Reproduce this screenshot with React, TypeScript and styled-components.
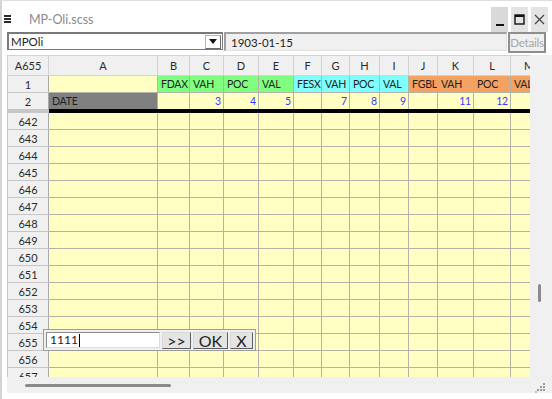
import styled, { createGlobalStyle } from "styled-components";

const GlobalStyle = createGlobalStyle`
  html, body {
    margin: 0;
    padding: 0;
    background: #ffffff;
  }
  body {
    font-family: Lato, "Noto Sans", sans-serif;
    color: #1e1e1e;
  }
`;

const Window = styled.div`
  width: 552px;
  height: 399px;
  box-sizing: border-box;
  border-left: 2px solid #d4d4d4;
  border-top: 1px solid #dedede;
  background: #ffffff;
  display: flex;
  flex-direction: column;
  overflow: hidden;
`;

const TitleBar = styled.div`
  height: 31px;
  display: flex;
  align-items: flex-start;
  padding-left: 2px;
  padding-right: 4px;
`;

const Hamburger = styled.div`
  width: 7px;
  margin-top: 14px;
  display: flex;
  flex-direction: column;
  gap: 1px;
  & > span {
    height: 2px;
    background: #2a2a2a;
  }
`;

const Title = styled.div`
  margin-left: 18px;
  margin-top: 11px;
  font-size: 12.5px;
  color: #8c8c8c;
`;

const WinButtons = styled.div`
  margin-left: auto;
  margin-top: 6px;
  display: flex;
  gap: 3px;
`;

const WinButton = styled.div<{ $bg?: string }>`
  width: 17px;
  height: 25px;
  background: ${(p) => p.$bg ?? "#d9d9d9"};
  display: flex;
  align-items: center;
  justify-content: center;
`;

const Toolbar = styled.div`
  height: 23px;
  display: flex;
  align-items: flex-start;
  padding-left: 5px;
`;

const Combo = styled.div`
  width: 216px;
  height: 18px;
  box-sizing: border-box;
  border: 1px solid #7a7a7a;
  border-top-width: 2px;
  border-left-width: 2px;
  background: #ffffff;
  display: flex;
  align-items: center;
  font-size: 11.5px;
  padding-left: 2px;
`;

const ComboText = styled.span`
  flex: 1;
`;

const DropButton = styled.div`
  width: 16px;
  height: 14px;
  box-sizing: border-box;
  border: 1px solid #b5b5b5;
  border-right-color: #6a6a6a;
  border-bottom-color: #6a6a6a;
  margin-right: 1px;
  background: #ffffff;
  display: flex;
  align-items: center;
  justify-content: center;
`;

const DateField = styled.div`
  width: 283px;
  height: 19px;
  box-sizing: border-box;
  margin-left: 1px;
  border: 1px solid #e0e0e0;
  border-top: 2px solid #a0a0a0;
  border-left: 2px solid #a0a0a0;
  background: #f0f0f0;
  font-size: 11.5px;
  padding-left: 5px;
  display: flex;
  align-items: center;
`;

const DetailsButton = styled.div`
  width: 38px;
  height: 21px;
  box-sizing: border-box;
  margin-left: 1px;
  border: 2px solid #8e8e8e;
  background: #f0f0f0;
  color: #a6a6a6;
  font-size: 11.5px;
  letter-spacing: -0.2px;
  display: flex;
  align-items: center;
  justify-content: center;
`;

const SheetArea = styled.div`
  margin-left: 5px;
  height: 338px;
  background: #f0f0f0;
  display: flex;
  flex-direction: column;
`;

const SheetRow = styled.div`
  height: 322px;
  display: flex;
`;

const Viewport = styled.div`
  position: relative;
  width: 523px;
  height: 322px;
  overflow: hidden;
  background: #f0f0f0;
`;

const VScroll = styled.div`
  flex: 1;
  display: flex;
  justify-content: center;
`;

const VThumb = styled.div`
  width: 3px;
  height: 18px;
  margin-top: 229px;
  margin-left: -3px;
  border-radius: 2px;
  background: #8a8a8a;
`;

const HScroll = styled.div`
  height: 16px;
  display: flex;
  align-items: flex-start;
  justify-content: space-between;
  padding-left: 18px;
  padding-right: 7px;
`;

const HThumb = styled.div`
  width: 146px;
  height: 3px;
  margin-top: 7px;
  border-radius: 2px;
  background: #8a8a8a;
`;

const Grip = styled.svg`
  margin-top: 6px;
`;

const Grid = styled.table<{ $w: number }>`
  border-collapse: collapse;
  table-layout: fixed;
  width: ${(p) => p.$w}px;
  font-size: 11px;
`;

const Cell = styled.td<{
  $bg?: string;
  $align?: string;
  $color?: string;
  $sep?: boolean;
}>`
  height: 16px;
  padding: 0 2px 0 3px;
  box-sizing: border-box;
  border: 1px solid #b3b2a6;
  ${(p) => (p.$sep ? "border-bottom: 4px solid #000;" : "")}
  background: ${(p) => p.$bg ?? "#ffffc4"};
  color: ${(p) => p.$color ?? "#1e1e1e"};
  text-align: ${(p) => p.$align ?? "left"};
  font-size: 10.5px;
  letter-spacing: -0.2px;
  white-space: nowrap;
  overflow: hidden;
  line-height: 15px;
`;

const HeadCell = styled.th<{ $sep?: boolean }>`
  height: 19px;
  padding: 0;
  border: 1px solid #d2d2d2;
  ${(p) => (p.$sep ? "border-bottom: 4px solid #000;" : "")}
  background: #f0f0f0;
  color: #2b2b2b;
  font-weight: normal;
  text-align: center;
  white-space: nowrap;
  overflow: hidden;
`;

const RowHead = styled(HeadCell)`
  height: 16px;
  border-color: #c6c6c6;
  border-right-color: #a9a9a9;
  line-height: 15px;
`;

const Editor = styled.div`
  position: absolute;
  left: 36px;
  top: 274px;
  width: 213px;
  height: 22px;
  box-sizing: border-box;
  border: 1px solid #9c9c9c;
  background: #f0f0f0;
  display: flex;
  align-items: center;
  padding-left: 2px;
  gap: 2px;
`;

const EditInput = styled.div`
  width: 114px;
  height: 16px;
  box-sizing: border-box;
  border: 1px solid #8a8a8a;
  border-right-color: #dcdcdc;
  border-bottom-color: #dcdcdc;
  background: #ffffff;
  font-size: 12px;
  line-height: 14px;
  padding-left: 3px;
  display: flex;
  align-items: center;
`;

const Caret = styled.span`
  width: 1px;
  height: 13px;
  background: #000;
  margin-left: 1px;
`;

const EditButton = styled.div<{ $w: number }>`
  width: ${(p) => p.$w}px;
  height: 17px;
  box-sizing: border-box;
  border: 1px solid #d8d8d8;
  border-right-color: #5e5e5e;
  border-bottom-color: #5e5e5e;
  background: #e4e4e4;
  font-size: 16px;
  line-height: 15px;
  color: #1e1e1e;
  display: flex;
  align-items: center;
  justify-content: center;
`;

const colWidths = [41, 109, 32, 34, 35, 35, 28, 28, 30, 29, 29, 36, 37, 37];
const letters = ["A", "B", "C", "D", "E", "F", "G", "H", "I", "J", "K", "L", "M"];
const tableWidth = colWidths.reduce((a, b) => a + b, 0);

const GREEN = "#80ff80";
const CYAN = "#80ffff";
const ORANGE = "#f4a261";

const row1: { text: string; bg: string }[] = [
  { text: "", bg: "#ffffc4" },
  { text: "FDAX", bg: GREEN },
  { text: "VAH", bg: GREEN },
  { text: "POC", bg: GREEN },
  { text: "VAL", bg: GREEN },
  { text: "FESX", bg: CYAN },
  { text: "VAH", bg: CYAN },
  { text: "POC", bg: CYAN },
  { text: "VAL", bg: CYAN },
  { text: "FGBL", bg: ORANGE },
  { text: "VAH", bg: ORANGE },
  { text: "POC", bg: ORANGE },
  { text: "VAL", bg: ORANGE },
];

const row2 = ["", "", "3", "4", "5", "", "7", "8", "9", "", "11", "12", ""];

const dataRows = Array.from({ length: 17 }, (_, i) => 642 + i);

const App = () => {
  return (
    <>
      <GlobalStyle />
      <Window>
        <TitleBar>
          <Hamburger>
            <span />
            <span />
            <span />
          </Hamburger>
          <Title>MP-Oli.scss</Title>
          <WinButtons>
            <WinButton>
              <svg width="10" height="14" viewBox="0 0 10 14">
                <rect x="1" y="11" width="8" height="2" fill="#111" />
              </svg>
            </WinButton>
            <WinButton $bg="#e4e4e4">
              <svg width="11" height="11" viewBox="0 0 11 11">
                <rect x="1" y="1" width="9" height="9" fill="none" stroke="#111" strokeWidth="1.4" />
                <rect x="1" y="1" width="9" height="2" fill="#111" />
              </svg>
            </WinButton>
            <WinButton $bg="#e4e4e4">
              <svg width="11" height="11" viewBox="0 0 11 11">
                <path d="M1 1 L10 10 M10 1 L1 10" stroke="#444" strokeWidth="1.2" />
              </svg>
            </WinButton>
          </WinButtons>
        </TitleBar>

        <Toolbar>
          <Combo>
            <ComboText>MPOli</ComboText>
            <DropButton>
              <svg width="8" height="5" viewBox="0 0 8 5">
                <path d="M0 0 H8 L4 5 Z" fill="#111" />
              </svg>
            </DropButton>
          </Combo>
          <DateField>1903-01-15</DateField>
          <DetailsButton>Details</DetailsButton>
        </Toolbar>

        <SheetArea>
          <SheetRow>
            <Viewport>
              <Grid $w={tableWidth}>
                <colgroup>
                  {colWidths.map((w, i) => (
                    <col key={i} style={{ width: w }} />
                  ))}
                </colgroup>
                <tbody>
                  <tr>
                    <HeadCell>A655</HeadCell>
                    {letters.map((l) => (
                      <HeadCell key={l}>{l}</HeadCell>
                    ))}
                  </tr>
                  <tr>
                    <RowHead>1</RowHead>
                    {row1.map((c, i) => (
                      <Cell key={i} $bg={c.bg}>
                        {c.text}
                      </Cell>
                    ))}
                  </tr>
                  <tr>
                    <RowHead $sep>2</RowHead>
                    <Cell $sep $bg="#808080">
                      DATE
                    </Cell>
                    {row2.slice(1).map((v, i) => (
                      <Cell key={i} $sep $align="right" $color="#3a3aff">
                        {v}
                      </Cell>
                    ))}
                  </tr>
                  {dataRows.map((n) => (
                    <tr key={n}>
                      <RowHead>{n}</RowHead>
                      {letters.map((l) => (
                        <Cell key={l} />
                      ))}
                    </tr>
                  ))}
                </tbody>
              </Grid>
              <Editor>
                <EditInput>
                  1111
                  <Caret />
                </EditInput>
                <EditButton $w={29}>&gt;&gt;</EditButton>
                <EditButton $w={35}>OK</EditButton>
                <EditButton $w={23}>X</EditButton>
              </Editor>
            </Viewport>
            <VScroll>
              <VThumb />
            </VScroll>
          </SheetRow>
          <HScroll>
            <HThumb />
            <Grip width="10" height="10" viewBox="0 0 10 10">
              <rect x="8" y="0" width="2" height="2" fill="#9a9a9a" />
              <rect x="5" y="3" width="2" height="2" fill="#9a9a9a" />
              <rect x="8" y="3" width="2" height="2" fill="#9a9a9a" />
              <rect x="2" y="6" width="2" height="2" fill="#9a9a9a" />
              <rect x="5" y="6" width="2" height="2" fill="#9a9a9a" />
              <rect x="8" y="6" width="2" height="2" fill="#9a9a9a" />
              <rect x="0" y="8" width="2" height="2" fill="#bdbdbd" />
            </Grip>
          </HScroll>
        </SheetArea>
      </Window>
    </>
  );
};

export default App;
